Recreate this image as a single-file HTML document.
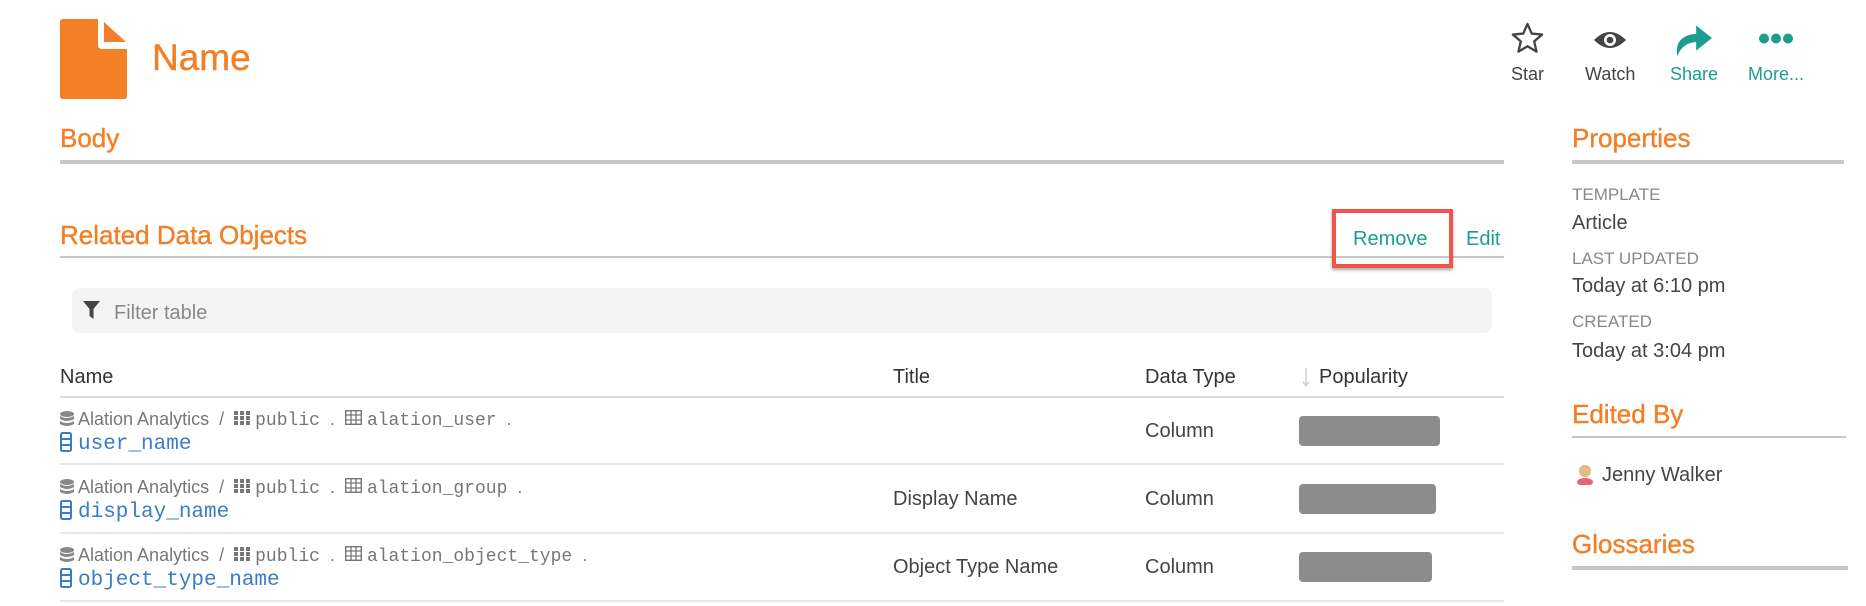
<!DOCTYPE html>
<html><head><meta charset="utf-8"><style>
*{margin:0;padding:0;box-sizing:border-box}
body{width:1866px;height:606px;background:#fff;position:relative;overflow:hidden;font-family:"Liberation Sans",sans-serif;color:#444}
.a{position:absolute;white-space:nowrap}
.or{color:#f37f26;-webkit-text-stroke:0.4px #f37f26}
.te{color:#1b9e8f}
.h26{font-size:26px;line-height:26px}
.rule{position:absolute;background:#c6c6c6}
.lbl{font-size:17px;line-height:17px;color:#888}
.val{font-size:20px;line-height:20px;color:#444}
.bc{font-size:18px;line-height:17px;color:#777}
.mono{font-family:"Liberation Mono",monospace}
.nm{font-family:"Liberation Mono",monospace;font-size:21px;line-height:21px;color:#3b7cc6}
.bar{position:absolute;background:#8c8c8c;border-radius:4px}
.sep{position:absolute;left:60px;width:1444px;height:2px;background:#e8e8e8}
</style></head><body>

<svg class="a" style="left:60px;top:19px" width="67" height="80" viewBox="0 0 67 80">
<path d="M3 0 H38 V26 Q38 30 42 30 H67 V77 Q67 80 64 80 H3 Q0 80 0 77 V3 Q0 0 3 0Z" fill="#f37f26"/>
<path d="M44 3 L66 23 H44Z" fill="#f37f26"/>
</svg>
<div class="a or" style="left:152px;top:39px;font-size:37px;line-height:37px">Name</div>

<svg class="a" style="left:1510px;top:21px" width="35" height="35" viewBox="0 0 24 24"><path d="M12 2 L14.9 8.6 L22 9.3 L16.6 14 L18.2 21 L12 17.3 L5.8 21 L7.4 14 L2 9.3 L9.1 8.6Z" fill="none" stroke="#444" stroke-width="1.6" stroke-linejoin="round"/></svg>
<svg class="a" style="left:1593px;top:30px" width="34" height="20" viewBox="0 0 34 20"><path d="M1 10 Q17 -6 33 10 Q17 26 1 10Z" fill="#444"/><circle cx="17" cy="10" r="6" fill="#fff"/><circle cx="17" cy="10" r="3.3" fill="#444"/></svg>
<svg class="a" style="left:1673px;top:21px" width="40" height="36" viewBox="0 0 38 34"><path d="M4 33 Q1 14 22 12 V4 L37 16 L22 28 V20 Q10 20 4 33Z" fill="#1b9e8f"/></svg>
<svg class="a" style="left:1759px;top:33px" width="34" height="11" viewBox="0 0 34 11"><circle cx="5" cy="5.5" r="5" fill="#1b9e8f"/><circle cx="17" cy="5.5" r="5" fill="#1b9e8f"/><circle cx="29" cy="5.5" r="5" fill="#1b9e8f"/></svg>
<div class="a" style="left:1511px;top:65px;font-size:18px;line-height:18px;color:#444">Star</div>
<div class="a" style="left:1585px;top:65px;font-size:18px;line-height:18px;color:#444">Watch</div>
<div class="a te" style="left:1670px;top:65px;font-size:18px;line-height:18px">Share</div>
<div class="a te" style="left:1748px;top:65px;font-size:18px;line-height:18px">More...</div>

<div class="a or h26" style="left:60px;top:125px">Body</div>
<div class="rule" style="left:60px;top:160px;width:1444px;height:4px"></div>

<div class="a or h26" style="left:60px;top:222px">Related Data Objects</div>
<div class="rule" style="left:60px;top:256px;width:1444px;height:2px;background:#c8c8c8"></div>
<div class="a" style="left:1332px;top:209px;width:121px;height:59px;border:4px solid #f0544c;box-shadow:0 2px 3px rgba(0,0,0,.35);background:transparent"></div>
<div class="a te" style="left:1353px;top:229px;font-size:20px;line-height:20px">Remove</div>
<div class="a te" style="left:1466px;top:229px;font-size:20px;line-height:20px">Edit</div>

<div class="a" style="left:72px;top:288px;width:1420px;height:45px;background:#f4f4f4;border-radius:8px"></div>
<svg class="a" style="left:83px;top:301px" width="17" height="18" viewBox="0 0 17 18"><path d="M0 0 H17 L10.5 8 V18 L6.5 15 V8Z" fill="#444"/></svg>
<div class="a" style="left:114px;top:303px;font-size:20px;line-height:20px;color:#888">Filter table</div>

<div class="a" style="left:60px;top:367px;font-size:20px;line-height:20px;color:#333">Name</div>
<div class="a" style="left:893px;top:367px;font-size:20px;line-height:20px;color:#333">Title</div>
<div class="a" style="left:1145px;top:367px;font-size:20px;line-height:20px;color:#333">Data Type</div>
<svg class="a" style="left:1301px;top:368px" width="10" height="19" viewBox="0 0 10 19"><path d="M5 0 V17 M2 13.5 L5 18 L8 13.5" stroke="#d4d4d4" stroke-width="1.6" fill="none"/></svg>
<div class="a" style="left:1319px;top:367px;font-size:20px;line-height:20px;color:#333">Popularity</div>
<div class="sep" style="top:396px;background:#ddd"></div>

<div class="a bc" style="left:60px;top:410px"><svg width="14" height="16" viewBox="0 0 14 16" style="vertical-align:-2px"><ellipse cx="7" cy="3" rx="7" ry="3" fill="#888"/><path d="M0 5 Q7 9 14 5 V8 Q7 12 0 8Z M0 10 Q7 14 14 10 V13 Q7 17 0 13Z" fill="#888"/></svg> Alation Analytics&nbsp; / &nbsp;<svg width="16" height="14" viewBox="0 0 16 14"><g fill="#777"><rect x="0" y="0" width="4" height="4"/><rect x="6" y="0" width="4" height="4"/><rect x="12" y="0" width="4" height="4"/><rect x="0" y="5" width="4" height="4"/><rect x="6" y="5" width="4" height="4"/><rect x="12" y="5" width="4" height="4"/><rect x="0" y="10" width="4" height="4"/><rect x="6" y="10" width="4" height="4"/><rect x="12" y="10" width="4" height="4"/></g></svg> <span class="mono" style="font-size:18px">public</span>&nbsp; . &nbsp;<svg width="17" height="15" viewBox="0 0 17 15"><rect x=".7" y=".7" width="15.6" height="13.6" fill="none" stroke="#777" stroke-width="1.4"/><path d="M0 5 H17 M0 10 H17 M6 0 V15 M11 0 V15" stroke="#777" stroke-width="1.3"/></svg> <span class="mono" style="font-size:18px">alation_user</span>&nbsp; .</div>
<svg class="a" style="left:60px;top:432px" width="12" height="20" viewBox="0 0 12 20"><rect x="1" y="1" width="10" height="18" rx="1.5" fill="none" stroke="#3b7cc6" stroke-width="2"/><path d="M1 7 H11 M1 13 H11" stroke="#3b7cc6" stroke-width="2"/></svg>
<div class="a nm" style="left:78px;top:434px">user_name</div>
<div class="a val" style="left:1145px;top:421px">Column</div>
<div class="bar" style="left:1299px;top:416px;width:141px;height:30px"></div>
<div class="sep" style="top:463px"></div>

<div class="a bc" style="left:60px;top:478px"><svg width="14" height="16" viewBox="0 0 14 16" style="vertical-align:-2px"><ellipse cx="7" cy="3" rx="7" ry="3" fill="#888"/><path d="M0 5 Q7 9 14 5 V8 Q7 12 0 8Z M0 10 Q7 14 14 10 V13 Q7 17 0 13Z" fill="#888"/></svg> Alation Analytics&nbsp; / &nbsp;<svg width="16" height="14" viewBox="0 0 16 14"><g fill="#777"><rect x="0" y="0" width="4" height="4"/><rect x="6" y="0" width="4" height="4"/><rect x="12" y="0" width="4" height="4"/><rect x="0" y="5" width="4" height="4"/><rect x="6" y="5" width="4" height="4"/><rect x="12" y="5" width="4" height="4"/><rect x="0" y="10" width="4" height="4"/><rect x="6" y="10" width="4" height="4"/><rect x="12" y="10" width="4" height="4"/></g></svg> <span class="mono" style="font-size:18px">public</span>&nbsp; . &nbsp;<svg width="17" height="15" viewBox="0 0 17 15"><rect x=".7" y=".7" width="15.6" height="13.6" fill="none" stroke="#777" stroke-width="1.4"/><path d="M0 5 H17 M0 10 H17 M6 0 V15 M11 0 V15" stroke="#777" stroke-width="1.3"/></svg> <span class="mono" style="font-size:18px">alation_group</span>&nbsp; .</div>
<svg class="a" style="left:60px;top:500px" width="12" height="20" viewBox="0 0 12 20"><rect x="1" y="1" width="10" height="18" rx="1.5" fill="none" stroke="#3b7cc6" stroke-width="2"/><path d="M1 7 H11 M1 13 H11" stroke="#3b7cc6" stroke-width="2"/></svg>
<div class="a nm" style="left:78px;top:502px">display_name</div>
<div class="a val" style="left:893px;top:489px">Display Name</div>
<div class="a val" style="left:1145px;top:489px">Column</div>
<div class="bar" style="left:1299px;top:484px;width:137px;height:30px"></div>
<div class="sep" style="top:532px"></div>

<div class="a bc" style="left:60px;top:546px"><svg width="14" height="16" viewBox="0 0 14 16" style="vertical-align:-2px"><ellipse cx="7" cy="3" rx="7" ry="3" fill="#888"/><path d="M0 5 Q7 9 14 5 V8 Q7 12 0 8Z M0 10 Q7 14 14 10 V13 Q7 17 0 13Z" fill="#888"/></svg> Alation Analytics&nbsp; / &nbsp;<svg width="16" height="14" viewBox="0 0 16 14"><g fill="#777"><rect x="0" y="0" width="4" height="4"/><rect x="6" y="0" width="4" height="4"/><rect x="12" y="0" width="4" height="4"/><rect x="0" y="5" width="4" height="4"/><rect x="6" y="5" width="4" height="4"/><rect x="12" y="5" width="4" height="4"/><rect x="0" y="10" width="4" height="4"/><rect x="6" y="10" width="4" height="4"/><rect x="12" y="10" width="4" height="4"/></g></svg> <span class="mono" style="font-size:18px">public</span>&nbsp; . &nbsp;<svg width="17" height="15" viewBox="0 0 17 15"><rect x=".7" y=".7" width="15.6" height="13.6" fill="none" stroke="#777" stroke-width="1.4"/><path d="M0 5 H17 M0 10 H17 M6 0 V15 M11 0 V15" stroke="#777" stroke-width="1.3"/></svg> <span class="mono" style="font-size:18px">alation_object_type</span>&nbsp; .</div>
<svg class="a" style="left:60px;top:568px" width="12" height="20" viewBox="0 0 12 20"><rect x="1" y="1" width="10" height="18" rx="1.5" fill="none" stroke="#3b7cc6" stroke-width="2"/><path d="M1 7 H11 M1 13 H11" stroke="#3b7cc6" stroke-width="2"/></svg>
<div class="a nm" style="left:78px;top:570px">object_type_name</div>
<div class="a val" style="left:893px;top:557px">Object Type Name</div>
<div class="a val" style="left:1145px;top:557px">Column</div>
<div class="bar" style="left:1299px;top:552px;width:133px;height:30px"></div>
<div class="sep" style="top:600px"></div>

<div class="a or h26" style="left:1572px;top:125px">Properties</div>
<div class="rule" style="left:1572px;top:160px;width:272px;height:4px"></div>
<div class="a lbl" style="left:1572px;top:186px">TEMPLATE</div>
<div class="a val" style="left:1572px;top:213px">Article</div>
<div class="a lbl" style="left:1572px;top:250px">LAST UPDATED</div>
<div class="a val" style="left:1572px;top:276px">Today at 6:10 pm</div>
<div class="a lbl" style="left:1572px;top:313px">CREATED</div>
<div class="a val" style="left:1572px;top:341px">Today at 3:04 pm</div>
<div class="a or h26" style="left:1572px;top:401px">Edited By</div>
<div class="rule" style="left:1572px;top:436px;width:274px;height:2px"></div>
<svg class="a" style="left:1575px;top:463px" width="20" height="22" viewBox="0 0 20 22"><ellipse cx="10" cy="19" rx="8" ry="4" fill="#e2677a"/><circle cx="10" cy="8" r="6" fill="#e9b98a"/><path d="M4 7 Q10 0 16 7 Q14 3 10 3 Q6 3 4 7Z" fill="#d9a06a"/></svg>
<div class="a val" style="left:1602px;top:465px">Jenny Walker</div>
<div class="a or h26" style="left:1572px;top:531px">Glossaries</div>
<div class="rule" style="left:1572px;top:566px;width:276px;height:4px"></div>
</body></html>
